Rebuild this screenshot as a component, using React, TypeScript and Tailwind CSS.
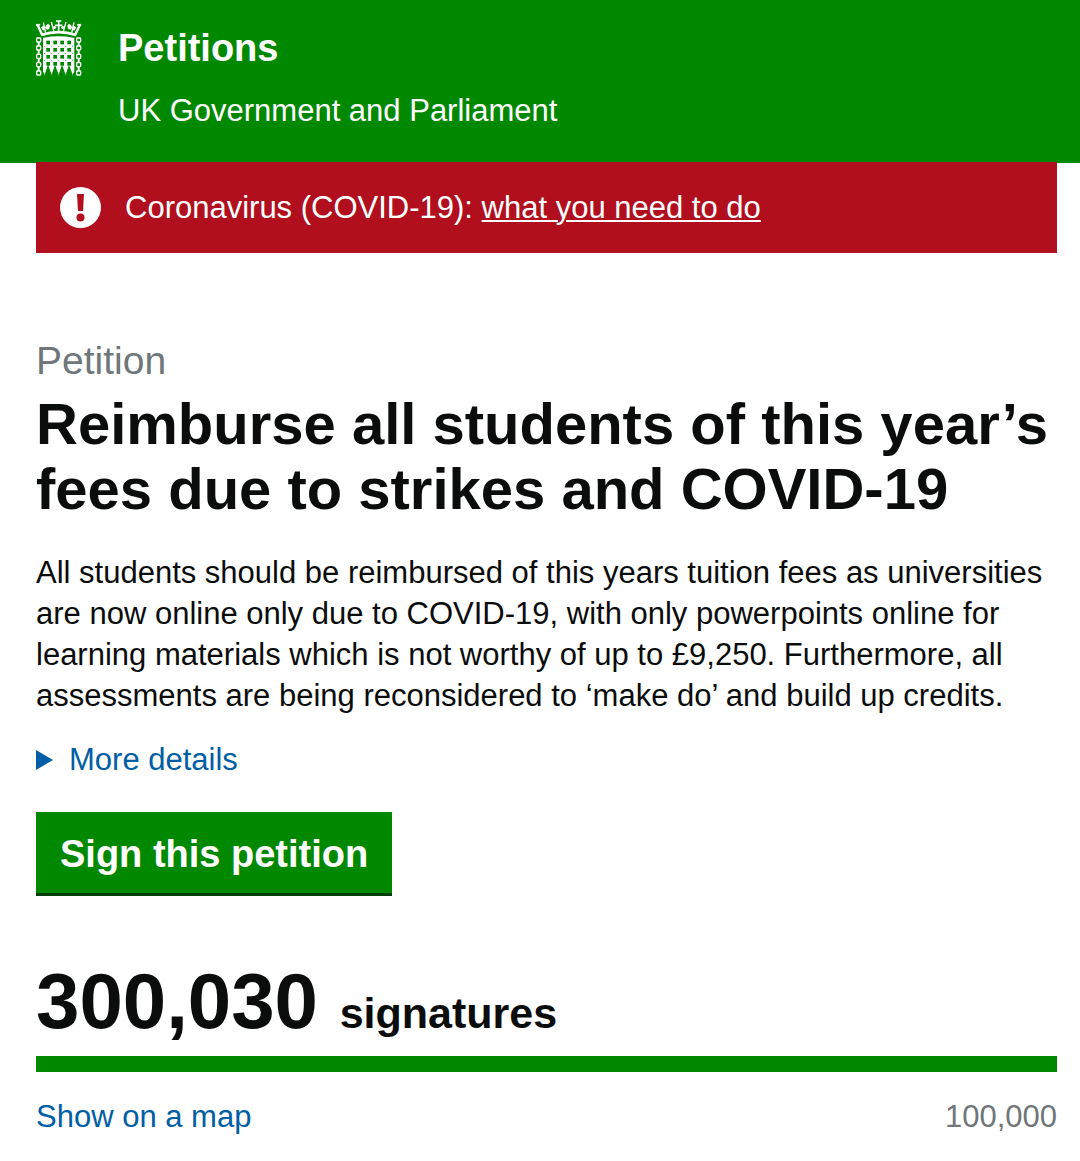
import React, { useState } from 'react';

const goal = 100000;
const signatures = 300030;

const holeColumns = [138, 159, 180, 201];
const holeRows = [120, 142, 163, 184];
const rivetColumns = [133, 154, 175, 196, 217];
const rivetRows = [137, 158, 179];
const chainLinks = [112, 136, 161, 186, 211];

function PortcullisLogo() {
  return (
    <svg viewBox="107 58 138 168" className="h-14 w-[46px] shrink-0" aria-hidden="true">
      {/* crown */}
      <g fill="none" stroke="#fff" strokeWidth="5">
        <path d="M112 74 L126 104" strokeWidth="7" />
        <path d="M238 74 L224 104" strokeWidth="7" />
        <path d="M123 103 Q175 86 227 103" strokeWidth="8" />
        <path d="M129 65 L136 97M221 65 L214 97" strokeWidth="4" />
        <path d="M153 64 L161 93M197 64 L189 93" strokeWidth="4" />
        <path d="M175 60 V94M167 61 H183M164 74 H186" />
      </g>
      <g fill="#fff">
        <circle cx="111" cy="73" r="4" />
        <circle cx="239" cy="73" r="4" />
        <circle cx="117" cy="72" r="3" />
        <circle cx="233" cy="72" r="3" />
        <path d="M138 73 L144 69 L149 75 L147 84 L140 87 L134 81 Z" />
        <path d="M212 73 L206 69 L201 75 L203 84 L210 87 L216 81 Z" />
        <path d="M122 80 L130 75 L135 85 L128 90 Z" />
        <path d="M228 80 L220 75 L215 85 L222 90 Z" />
        <path d="M157 79 L164 75 L168 81 L163 86 Z" />
        <path d="M193 79 L186 75 L182 81 L187 86 Z" />
      </g>
      {/* grille with spiked feet */}
      <path d="M131 111 Q175 103 219 111 H222 V213 L217 221 V226 H133 V221 L128 213 V111 Z" fill="#fff" />
      <g fill="#008800">
        {holeRows.map((y) => holeColumns.map((x) => <rect key={`${x}-${y}`} x={x} y={y} width="11" height="11" />))}
        {holeColumns.map((x) => (
          <path key={x} d={`M${x + 5} 192 L${x + 16} 222 V226 H${x - 5} V222 Z`} />
        ))}
        {rivetRows.map((y) => rivetColumns.map((x) => <circle key={`${x}-${y}`} cx={x} cy={y} r="1.500" />))}
      </g>
      {/* chains */}
      <g fill="none" stroke="#fff" strokeWidth="4">
        <path d="M115 124v11M115 149v11M115 174v11M115 199v11M235 124v11M235 149v11M235 174v11M235 199v11" strokeWidth="6" />
        {chainLinks.map((y) => (
          <React.Fragment key={y}>
            <rect x="109" y={y} width="12" height="12" rx="2" />
            <rect x="229" y={y} width="12" height="12" rx="2" />
          </React.Fragment>
        ))}
      </g>
    </svg>
  );
}

function WarningIcon() {
  return (
    <svg viewBox="0 0 41 41" className="size-[41px] shrink-0" aria-hidden="true">
      <circle cx="20.5" cy="20.5" r="20.5" fill="#fff" />
      <path d="M17 7h7l-1 17h-5z" fill="#b10e1e" />
      <circle cx="20.500" cy="30.500" r="4" fill="#b10e1e" />
    </svg>
  );
}

export default function App() {
  const [open, setOpen] = useState(false);
  const progress = Math.min(100, (signatures / goal) * 100);

  return (
    <div className="bg-white pb-6 font-['Liberation_Sans',Arial,sans-serif] text-[31px] leading-[41px] text-[#0b0c0c]">
      <header className="flex gap-9 bg-[#008800] pt-5 pr-6 pb-8 pl-9 text-white">
        <PortcullisLogo />
        <div>
          <a href="#home" className="block text-[38px] leading-[56px] font-bold">Petitions</a>
          <p className="mt-[14px]">UK Government and Parliament</p>
        </div>
      </header>

      <main className="-mt-px pr-[23px] pl-9">
        <section className="flex items-center gap-6 bg-[#b10e1e] px-6 py-[25px] text-white">
          <WarningIcon />
          <p>
            Coronavirus (COVID-19): <a href="#coronavirus" className="underline decoration-2 underline-offset-2">what you need to do</a>
          </p>
        </section>

        <h1 className="mt-[78px] text-[58px] leading-[65px] font-bold">
          <span className="block text-[39px] leading-[60px] font-normal text-[#6f777b]">Petition</span>
          Reimburse all students of this year’s fees due to strikes and COVID-19
        </h1>

        <p className="mt-[31px]">
          All students should be reimbursed of this years tuition fees as universities are now online only due to COVID-19, with only powerpoints online for learning materials which is not worthy of up to £9,250. Furthermore, all assessments are being reconsidered to ‘make do’ and build up credits.
        </p>

        <button type="button" aria-expanded={open} onClick={() => setOpen(!open)} className="mt-[23px] flex items-center gap-4 text-[#005ea5]">
          <svg viewBox="0 0 17 20" className="h-5 w-[17px]" aria-hidden="true">
            <path d="M0 0L17 10L0 20Z" fill="currentColor" />
          </svg>
          More details
        </button>

        <button type="button" className="mt-8 block border-b-3 border-[#003d00] bg-[#008800] px-6 pt-[22px] pb-[18px] text-[38px] leading-[41px] font-bold text-white">
          Sign this petition
        </button>

        <p className="mt-[63px] text-[43px] leading-[84px] font-bold">
          <span className="text-[78px]">300,030 </span>signatures
        </p>

        <div className="mt-px h-4">
          <div className="h-4 bg-[#008800]" style={{ width: `${progress}%` }} />
        </div>

        <div className="mt-6 flex justify-between">
          <a href="#map" className="text-[#005ea5]">Show on a map</a>
          <span className="text-[#6f777b]">100,000</span>
        </div>
      </main>
    </div>
  );
}
